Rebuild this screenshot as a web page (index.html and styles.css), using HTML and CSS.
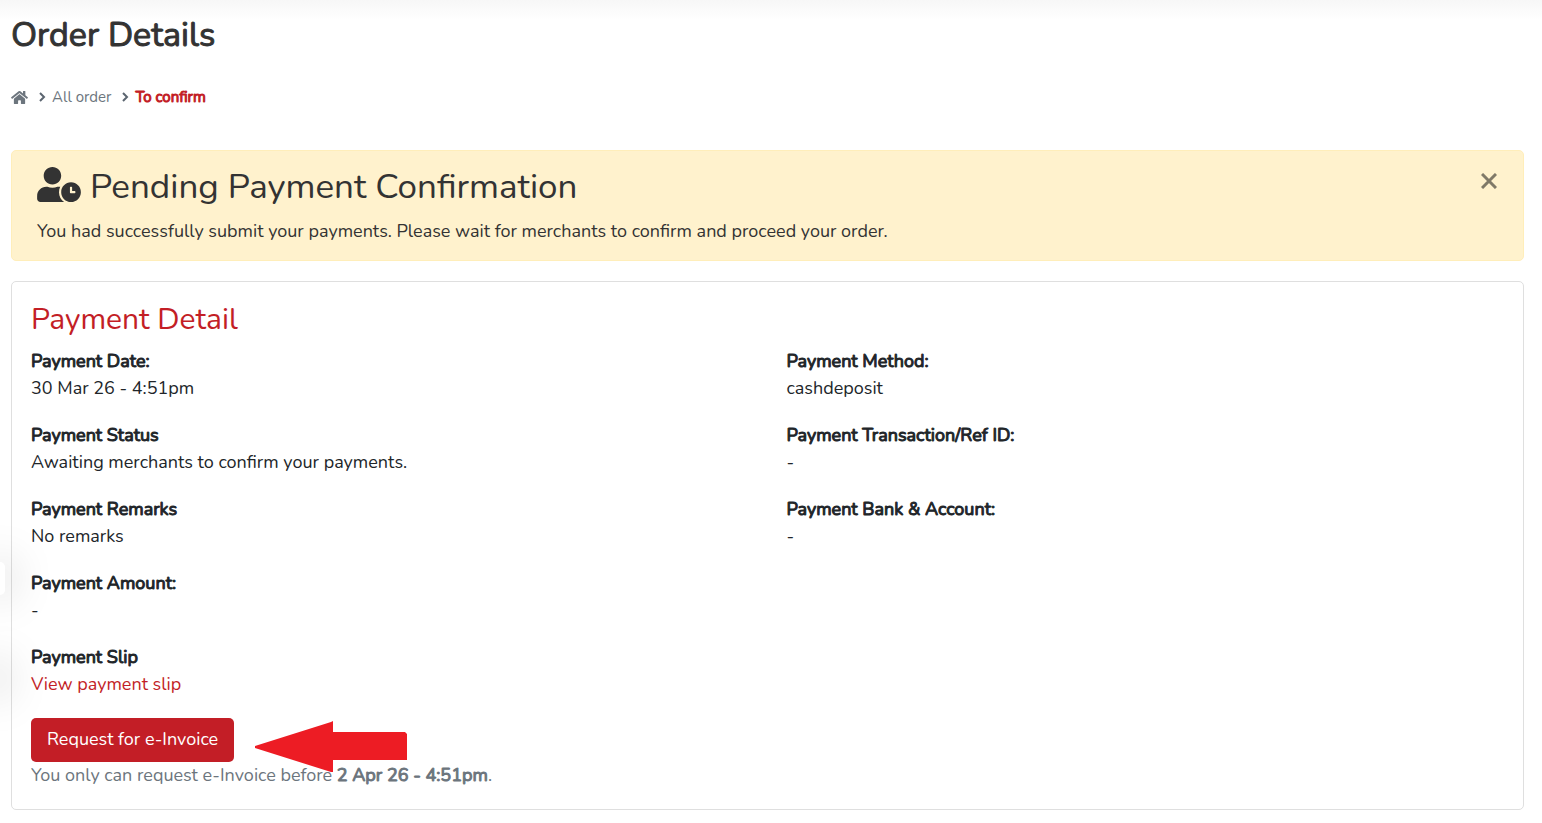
FILE: index.html
```html
<!DOCTYPE html>
<html lang="en">
<head>
    <meta charset="UTF-8">
    <meta name="viewport" content="width=device-width, initial-scale=1.0">
    <title>Order Details</title>
    <link rel="stylesheet" href="styles.css">
</head>
<body>

    <div class="side-tab"></div>
    <div class="side-tab side-tab-hidden"></div>

    <main class="container">
        <h1>Order Details</h1>

        <nav class="breadcrumb" aria-label="Breadcrumb">
            <a href="#" class="home" aria-label="Home">
                <svg viewBox="0 0 576 512" width="17" height="15" fill="currentColor"><path d="M280.4 148.3L96 300.1V464a16 16 0 0 0 16 16l112-.3a16 16 0 0 0 16-16V368a16 16 0 0 1 16-16h64a16 16 0 0 1 16 16v95.6a16 16 0 0 0 16 16.1l112 .3a16 16 0 0 0 16-16V300L295.700 148.300a12.200 12.200 0 0 0-15.300 0zM571.600 251.500L488 182.600V44a12 12 0 0 0-12-12h-56a12 12 0 0 0-12 12v72.600L318.500 43a48 48 0 0 0-61 0L4.300 251.500a12 12 0 0 0-1.600 16.900l25.500 31a12 12 0 0 0 16.900 1.600l235.300-193.700a12.200 12.200 0 0 1 15.300 0L531 301a12 12 0 0 0 16.900-1.600l25.500-31a12 12 0 0 0-1.800-16.900z"/></svg>
            </a>
            <svg class="chevron" viewBox="0 0 8 10" width="8" height="10"><path d="M2 1l4 4-4 4"/></svg>
            <a href="#" class="link">All order</a>
            <svg class="chevron" viewBox="0 0 8 10" width="8" height="10"><path d="M2 1l4 4-4 4"/></svg>
            <a href="#" class="active" aria-current="page">To confirm</a>
        </nav>

        <div class="alert" role="alert">
            <div class="alert-body">
                <h2>
                    <svg viewBox="0 0 640 512" width="44" height="35" fill="currentColor" aria-hidden="true"><path d="M496 224c-79.600 0-144 64.400-144 144s64.400 144 144 144 144-64.400 144-144-64.400-144-144-144zm64 150.300c0 5.300-4.400 9.700-9.700 9.700h-60.600c-5.300 0-9.700-4.400-9.700-9.700v-76.600c0-5.300 4.400-9.700 9.700-9.700h12.600c5.300 0 9.700 4.400 9.700 9.700V352h38.300c5.300 0 9.700 4.400 9.700 9.700v12.600zM320 368c0-27.800 6.700-54.100 18.200-77.500-8-1.500-16.200-2.500-24.600-2.500h-16.700c-22.200 10.200-46.900 16-72.900 16s-50.600-5.800-72.900-16h-16.700C60.200 288 0 348.200 0 422.400V464c0 26.500 21.500 48 48 48h347.100c-45.300-31.900-75.100-84.500-75.100-144zm-96-112c70.700 0 128-57.300 128-128S294.700 0 224 0 96 57.300 96 128s57.300 128 128 128z"/></svg>
                    Pending Payment Confirmation
                </h2>
                <p>You had successfully submit your payments. Please wait for merchants to confirm and proceed your order.</p>
            </div>
            <button type="button" class="close" aria-label="Close">
                <svg viewBox="0 0 16 16" width="16" height="16"><path d="M1 1l14 14M15 1L1 15"/></svg>
            </button>
        </div>

        <section class="card">
            <h3>Payment Detail</h3>

            <div class="columns">
                <dl>
                    <dt>Payment Date:</dt>
                    <dd>30 Mar 26 - 4:51pm</dd>
                    <dt>Payment Status</dt>
                    <dd>Awaiting merchants to confirm your payments.</dd>
                    <dt>Payment Remarks</dt>
                    <dd>No remarks</dd>
                    <dt>Payment Amount:</dt>
                    <dd>-</dd>
                    <dt>Payment Slip</dt>
                    <dd><a href="#">View payment slip</a></dd>
                </dl>
                <dl>
                    <dt>Payment Method:</dt>
                    <dd>cashdeposit</dd>
                    <dt>Payment Transaction/Ref ID:</dt>
                    <dd>-</dd>
                    <dt>Payment Bank &amp; Account:</dt>
                    <dd>-</dd>
                </dl>
            </div>

            <div class="invoice">
                <button type="button" class="btn">Request for e-Invoice</button>
                <svg class="arrow" viewBox="0 0 153 52" width="153" height="52" aria-hidden="true"><path d="M1 25L77 1l2-1v11h72l2 2v26H79v12h-2L1 27z"/></svg>
            </div>
            <p class="note">You only can request e-Invoice before <strong>2 Apr 26 - 4:51pm</strong>.</p>
        </section>
    </main>

</body>
</html>
```
FILE: styles.css
```css
* {
    box-sizing: border-box;
}

body {
    margin: 0;
    font-family: 'Nunito', 'Noto Sans', sans-serif;
    font-size: 18px;
    line-height: 27px;
    color: #212529;
    background: linear-gradient(#f7f7f7, #fff 20px) no-repeat #fff;
}

h1, h2, h3, p, dl, dd {
    margin: 0;
}

h1, h2, h3 {
    font-weight: 400;
}

/* 加粗文字保持常规字宽 */
h1, dt, strong, .active {
    font-weight: 400;
    -webkit-text-stroke: 1px currentColor;
}

a {
    color: #c31e26;
    text-decoration: none;
}

.container {
    padding: 13px 18px 12px 11px;
}

h1 {
    font-size: 34px;
    line-height: 44px;
    color: #333;
}

/* 面包屑 */
.breadcrumb {
    display: flex;
    align-items: center;
    gap: 6px;
    margin: 27px 0 40px;
    font-size: 15px;
    line-height: 26px;
}

.breadcrumb a {
    color: #6c757d;
}

.breadcrumb .home,
.breadcrumb .link {
    display: flex;
    margin-right: 4px;
}

.breadcrumb .active {
    color: #c31e26;
}

.chevron {
    fill: none;
    stroke: #5b6570;
    stroke-width: 2;
}

.alert {
    display: flex;
    justify-content: space-between;
    align-items: flex-start;
    min-height: 111px;
    padding: 14px 26px 14px 25px;
    border: 1px solid #ffeeba;
    border-radius: 5px;
    background-color: #fff2cd;
    color: #333;
}

.alert h2 {
    display: flex;
    align-items: flex-start;
    gap: 9px;
    margin-bottom: 10px;
    font-size: 35px;
    line-height: 43px;
}

.alert h2 svg {
    margin-top: 2px;
}

.close {
    display: flex;
    margin-top: 8px;
    padding: 0;
    border: none;
    background: none;
    cursor: pointer;
}

.close path {
    fill: none;
    stroke: #807a68;
    stroke-width: 3;
}

.card {
    margin-top: 20px;
    padding: 20px 19px;
    border: 1px solid #dfdfdf;
    border-radius: 5px;
}

.card h3 {
    margin-bottom: 10px;
    font-size: 30px;
    line-height: 36px;
    color: #c31e26;
}

.columns {
    display: grid;
    grid-template-columns: 1fr 1fr;
    gap: 38px;
}

dd {
    margin-bottom: 20px;
}

.invoice {
    display: flex;
    gap: 20px;
}

.btn {
    height: 44px;
    padding: 0 16px 2px;
    border: none;
    border-radius: 5px;
    background-color: #c31e26;
    color: #fff;
    font-family: inherit;
    font-size: 18px;
    cursor: pointer;
}

.arrow {
    margin: 3px 0 -11px;
    fill: #ed1c24;
}

.note {
    color: #6c757d;
}

/* 左侧悬浮标签 */
.side-tab {
    position: absolute;
    z-index: 1;
    top: 562px;
    left: 0;
    width: 5px;
    height: 33px;
    border-radius: 0 5px 5px 0;
    background-color: #fff;
    box-shadow: 0 0 40px 4px rgba(0, 0, 0, 0.25);
}

.side-tab-hidden {
    z-index: 0;
    top: 662px;
    left: -5px;
}
```
